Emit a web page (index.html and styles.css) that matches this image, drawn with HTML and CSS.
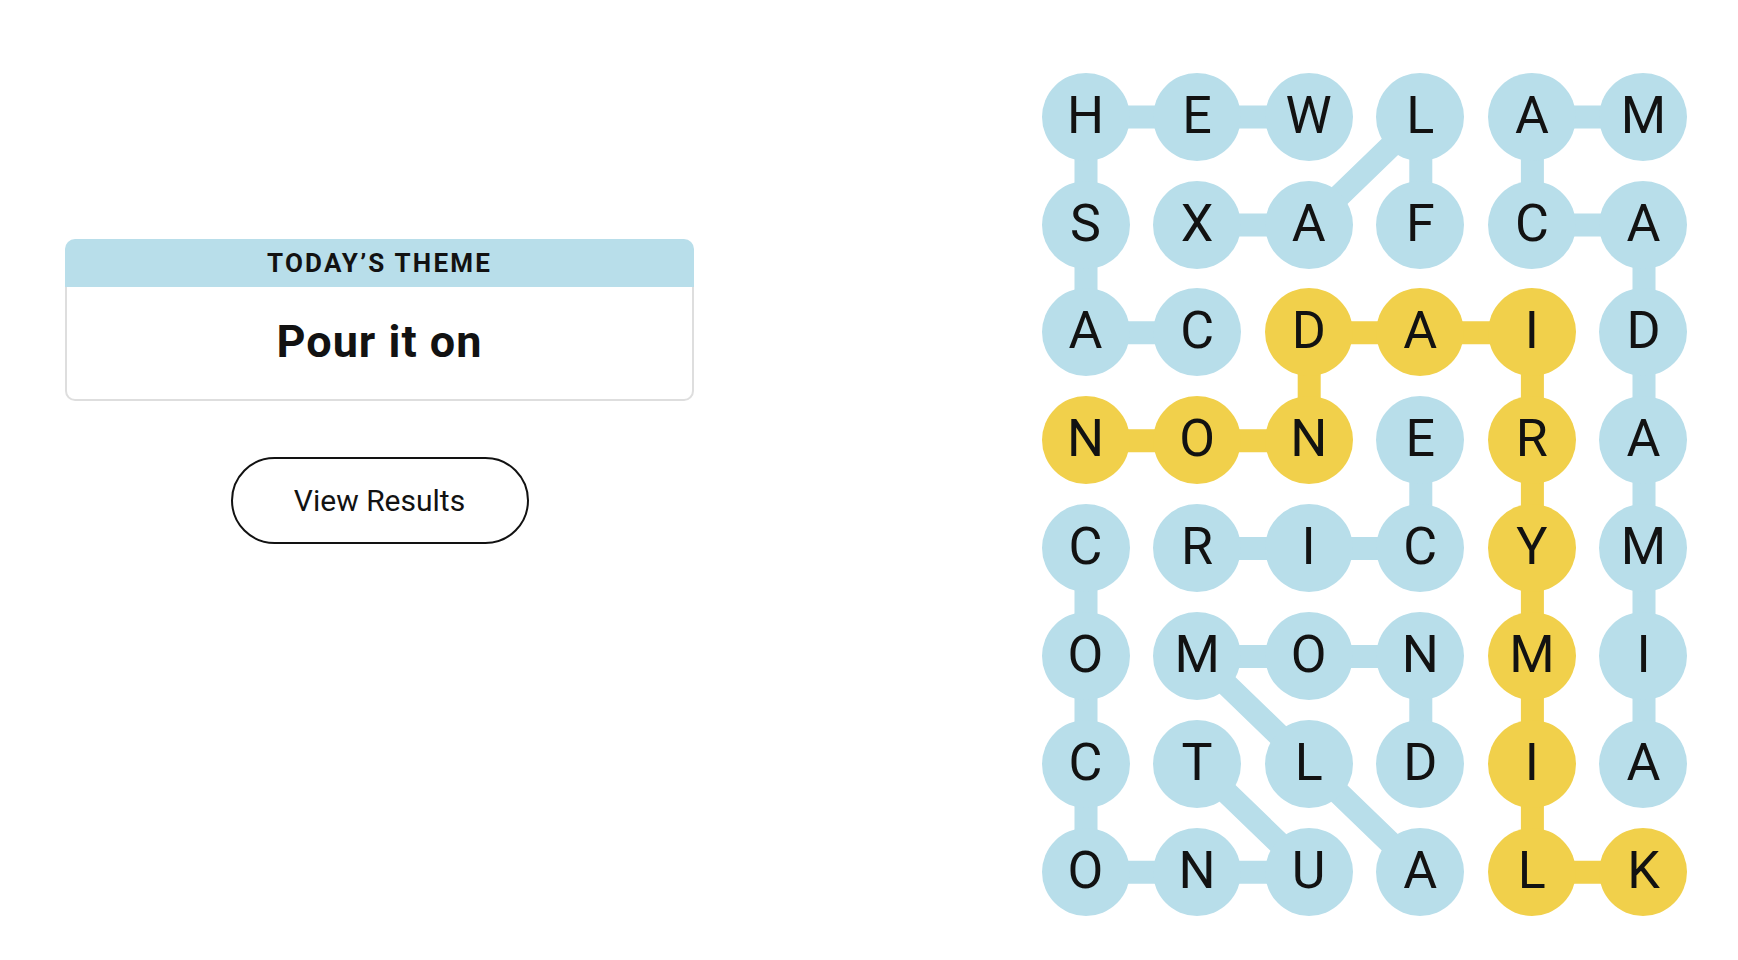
FILE: index.html
```html
<!DOCTYPE html>
<html lang="en">
<head>
    <meta charset="UTF-8">
    <meta name="viewport" content="width=device-width, initial-scale=1.0">
    <title>Strands</title>
    <link rel="stylesheet" href="styles.css">
</head>
<body>

    <main class="game">
        <section class="sidebar">
            <div class="theme-card">
                <h3 class="theme-label">TODAY’S THEME</h3>
                <div class="theme-body">
                    <h1 class="theme-title">Pour it on</h1>
                </div>
            </div>
            <button class="results-btn">View Results</button>
        </section>

        <section class="board">
            <!-- connectors between found letters -->
            <svg class="links" width="646" height="844" viewBox="0 0 646 844">
                <g class="found">
                    <polyline points="155.6,259.8 44,259.8 44,151.9 44,44 155.6,44 267.2,44"/>
                    <polyline points="378.8,151.9 378.8,44 267.2,151.9 155.6,151.9"/>
                    <polyline points="602,44 490.4,44 490.4,151.9 602,151.9 602,259.8 602,367.7 602,475.6 602,583.5 602,691.4"/>
                    <polyline points="155.6,475.6 267.2,475.6 378.8,475.6 378.8,367.7"/>
                    <polyline points="44,475.6 44,583.5 44,691.4 44,799.3 155.6,799.3 267.2,799.3 155.6,691.4"/>
                    <polyline points="378.8,799.3 267.2,691.4 155.6,583.5 267.2,583.5 378.8,583.5 378.8,691.4"/>
                </g>
                <g class="spangram">
                    <polyline points="44,367.7 155.6,367.7 267.2,367.7 267.2,259.8 378.8,259.8 490.4,259.8 490.4,367.7 490.4,475.6 490.4,583.5 490.4,691.4 490.4,799.3 602,799.3"/>
                </g>
            </svg>

            <div class="grid">
                <span class="tile">H</span><span class="tile">E</span><span class="tile">W</span><span class="tile">L</span><span class="tile">A</span><span class="tile">M</span>
                <span class="tile">S</span><span class="tile">X</span><span class="tile">A</span><span class="tile">F</span><span class="tile">C</span><span class="tile">A</span>
                <span class="tile">A</span><span class="tile">C</span><span class="tile span">D</span><span class="tile span">A</span><span class="tile span">I</span><span class="tile">D</span>
                <span class="tile span">N</span><span class="tile span">O</span><span class="tile span">N</span><span class="tile">E</span><span class="tile span">R</span><span class="tile">A</span>
                <span class="tile">C</span><span class="tile">R</span><span class="tile">I</span><span class="tile">C</span><span class="tile span">Y</span><span class="tile">M</span>
                <span class="tile">O</span><span class="tile">M</span><span class="tile">O</span><span class="tile">N</span><span class="tile span">M</span><span class="tile">I</span>
                <span class="tile">C</span><span class="tile">T</span><span class="tile">L</span><span class="tile">D</span><span class="tile span">I</span><span class="tile">A</span>
                <span class="tile">O</span><span class="tile">N</span><span class="tile">U</span><span class="tile">A</span><span class="tile span">L</span><span class="tile span">K</span>
            </div>
        </section>
    </main>

</body>
</html>
```

FILE: styles.css
```css
* {
    margin: 0;
    padding: 0;
    box-sizing: border-box;
}

body {
    font-family: Roboto, "Liberation Sans", sans-serif;
    background: #ffffff;
    color: #121212;
    height: 100vh;
    overflow: hidden;
}

.game {
    display: flex;
    align-items: flex-start;
    padding: 72.7px 0 0 65px;
}

/* left column */
.sidebar {
    width: 629px;
    margin-top: 166.3px;
    display: flex;
    flex-direction: column;
    align-items: center;
}

.theme-card {
    width: 100%;
    display: flex;
    flex-direction: column;
}

.theme-label {
    height: 48px;
    background: #b8deea;
    border-radius: 10px 10px 0 0;
    display: flex;
    align-items: center;
    justify-content: center;
    padding-top: 1px;
    font-size: 26px;
    font-weight: 700;
    letter-spacing: 2.2px;
}

.theme-body {
    height: 114px;
    border: 2px solid #dedede;
    border-top: none;
    border-radius: 0 0 10px 10px;
    display: flex;
    align-items: center;
    justify-content: center;
    padding-bottom: 2px;
}

.theme-title {
    font-size: 45px;
    font-weight: 700;
    line-height: 1;
    letter-spacing: 1px;
}

.results-btn {
    margin-top: 56.5px;
    width: 298px;
    height: 87px;
    background: #fff;
    border: 2px solid #121212;
    border-radius: 44px;
    font-family: inherit;
    font-size: 30px;
    color: #121212;
    cursor: pointer;
}

/* board */
.board {
    position: relative;
    margin-left: 347.5px;
}

.links {
    position: absolute;
    top: 0;
    left: 0;
}

.links polyline {
    fill: none;
    stroke-width: 23;
    stroke-linejoin: round;
}

.found polyline {
    stroke: #b8deea;
}

.spangram polyline {
    stroke: #f1d04b;
}

.grid {
    position: relative;
    display: grid;
    grid-template-columns: repeat(6, 88px);
    grid-auto-rows: 88px;
    column-gap: 23.6px;
    row-gap: 19.9px;
}

.tile {
    width: 88px;
    height: 88px;
    border-radius: 50%;
    background: #b8deea;
    display: flex;
    align-items: center;
    justify-content: center;
    font-size: 52px;
    line-height: 1;
    padding-bottom: 2px;
}

.tile.span {
    background: #f1d04b;
}
```
